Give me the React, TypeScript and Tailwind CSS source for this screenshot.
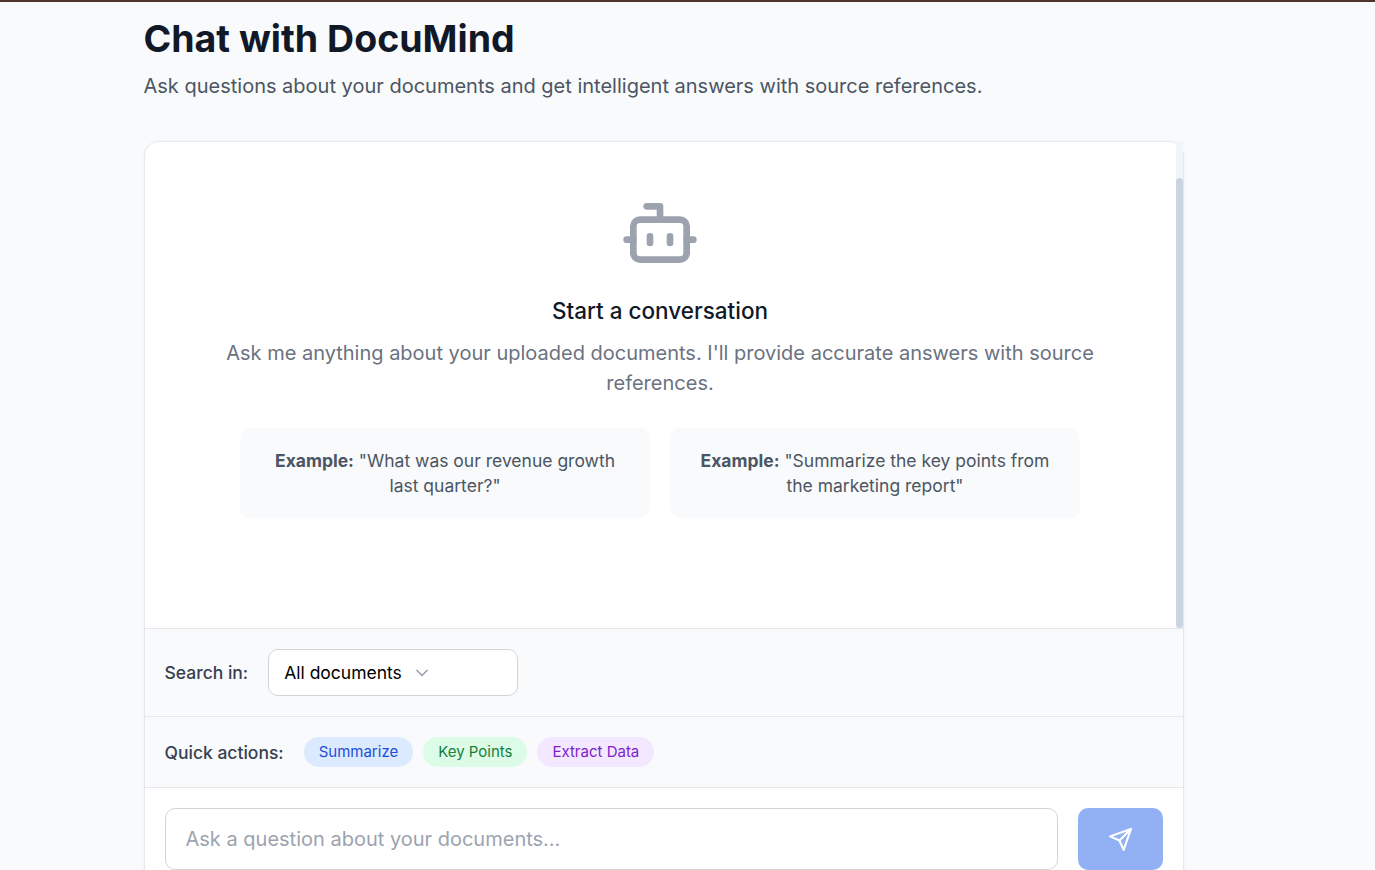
import type { ReactNode } from 'react';

function BotIcon() {
  return (
    <svg className="size-20" viewBox="0 0 24 24" fill="none" stroke="#9ca3af" strokeWidth="2" strokeLinecap="round" strokeLinejoin="round">
      <path d="M12 8V4H8" />
      <rect width="16" height="12" x="4" y="8" rx="2" />
      <path d="M2 14h2M20 14h2M15 13v2M9 13v2" />
    </svg>
  );
}

function Example({ children }: { children: ReactNode }) {
  return (
    <div className="h-[90px] w-[410px] rounded-[10px] bg-[#f9fafb] p-5 text-center text-[17.5px] leading-[25px] text-[#4b5563]">
      <strong className="font-bold">Example:</strong> {children}
    </div>
  );
}

function Pill({ className, children }: { className: string; children: ReactNode }) {
  return <button className={`h-[30px] rounded-full px-[15px] text-[15px] leading-5 ${className}`}>{children}</button>;
}

export default function App() {
  return (
    <div className="h-[870px] overflow-hidden border-t-2 border-[#4f3429] bg-[#f9fafb] font-[Inter,sans-serif]">
      <main className="ml-[143.5px] w-[1040px]">
        <h1 className="pt-[14px] text-[37.5px] leading-[45px] font-bold text-[#111827]">Chat with DocuMind</h1>
        <p className="mt-[10px] text-[20px] leading-[30px] text-[#4b5563]">
          Ask questions about your documents and get intelligent answers with source references.
        </p>
        <section className="mt-10 h-[780px] rounded-[15px] border border-[#e5e7eb] bg-white shadow-[0_1px_3px_rgba(0,0,0,0.06)]">
          <div className="flex h-[486px]">
            <div className="flex flex-1 flex-col items-center pt-[51px]">
              <BotIcon />
              <h2 className="mt-5 text-[22.5px] leading-[35px] font-medium text-[#111827]">Start a conversation</h2>
              <p className="mt-[10px] w-[950px] text-center text-[20px] leading-[30px] text-[#6b7280]">
                Ask me anything about your uploaded documents. I'll provide accurate answers with source
                <br />
                references.
              </p>
              <div className="mt-[30px] flex gap-5">
                <Example>"What was our revenue growth last quarter?"</Example>
                <Example>"Summarize the key points from the marketing report"</Example>
              </div>
            </div>
            <div className="w-[7px] bg-[#f1f5f9] pt-9">
              <div className="h-[450px] rounded-full bg-[#cbd5e1]" />
            </div>
          </div>
          <div className="flex h-[88px] items-center gap-5 border-t border-[#e5e7eb] bg-[#f9fafb] px-5">
            <span className="text-[17.5px] leading-[25px] font-medium text-[#374151]">Search in:</span>
            <button className="flex h-[47px] w-[250px] items-center rounded-[10px] border border-[#d1d5db] bg-white pl-[15px] text-[17.5px] leading-[25px] text-black">
              <span>All documents</span>
              <svg className="ml-[10.5px] size-5" viewBox="0 0 24 24" fill="none" stroke="#9ca3af" strokeWidth="2" strokeLinecap="round" strokeLinejoin="round">
                <path d="m6 9 6 6 6-6" />
              </svg>
            </button>
          </div>
          <div className="flex h-[71px] items-center border-t border-[#e5e7eb] bg-[#f9fafb] px-5">
            <span className="mr-5 text-[17.5px] leading-[25px] font-medium text-[#374151]">Quick actions:</span>
            <div className="flex gap-[10px]">
              <Pill className="bg-[#dbeafe] text-[#1d4ed8]">Summarize</Pill>
              <Pill className="bg-[#dcfce7] text-[#15803d]">Key Points</Pill>
              <Pill className="bg-[#f3e8ff] text-[#7e22ce]">Extract Data</Pill>
            </div>
          </div>
          <div className="flex gap-5 border-t border-[#e5e7eb] p-5">
            <input
              className="h-[62px] flex-1 rounded-[10px] border border-[#d1d5db] px-5 text-[20px] placeholder:text-[#9ca3af]"
              placeholder="Ask a question about your documents..."
            />
            <button className="flex h-[62px] w-[85px] items-center justify-center rounded-[10px] bg-[#92b1f5]">
              <svg className="size-[25px]" viewBox="0 0 24 24" fill="none" stroke="#fff" strokeWidth="2" strokeLinecap="round" strokeLinejoin="round">
                <path d="m22 2-7 20-4-9-9-4Z" />
                <path d="M22 2 11 13" />
              </svg>
            </button>
          </div>
        </section>
      </main>
    </div>
  );
}
